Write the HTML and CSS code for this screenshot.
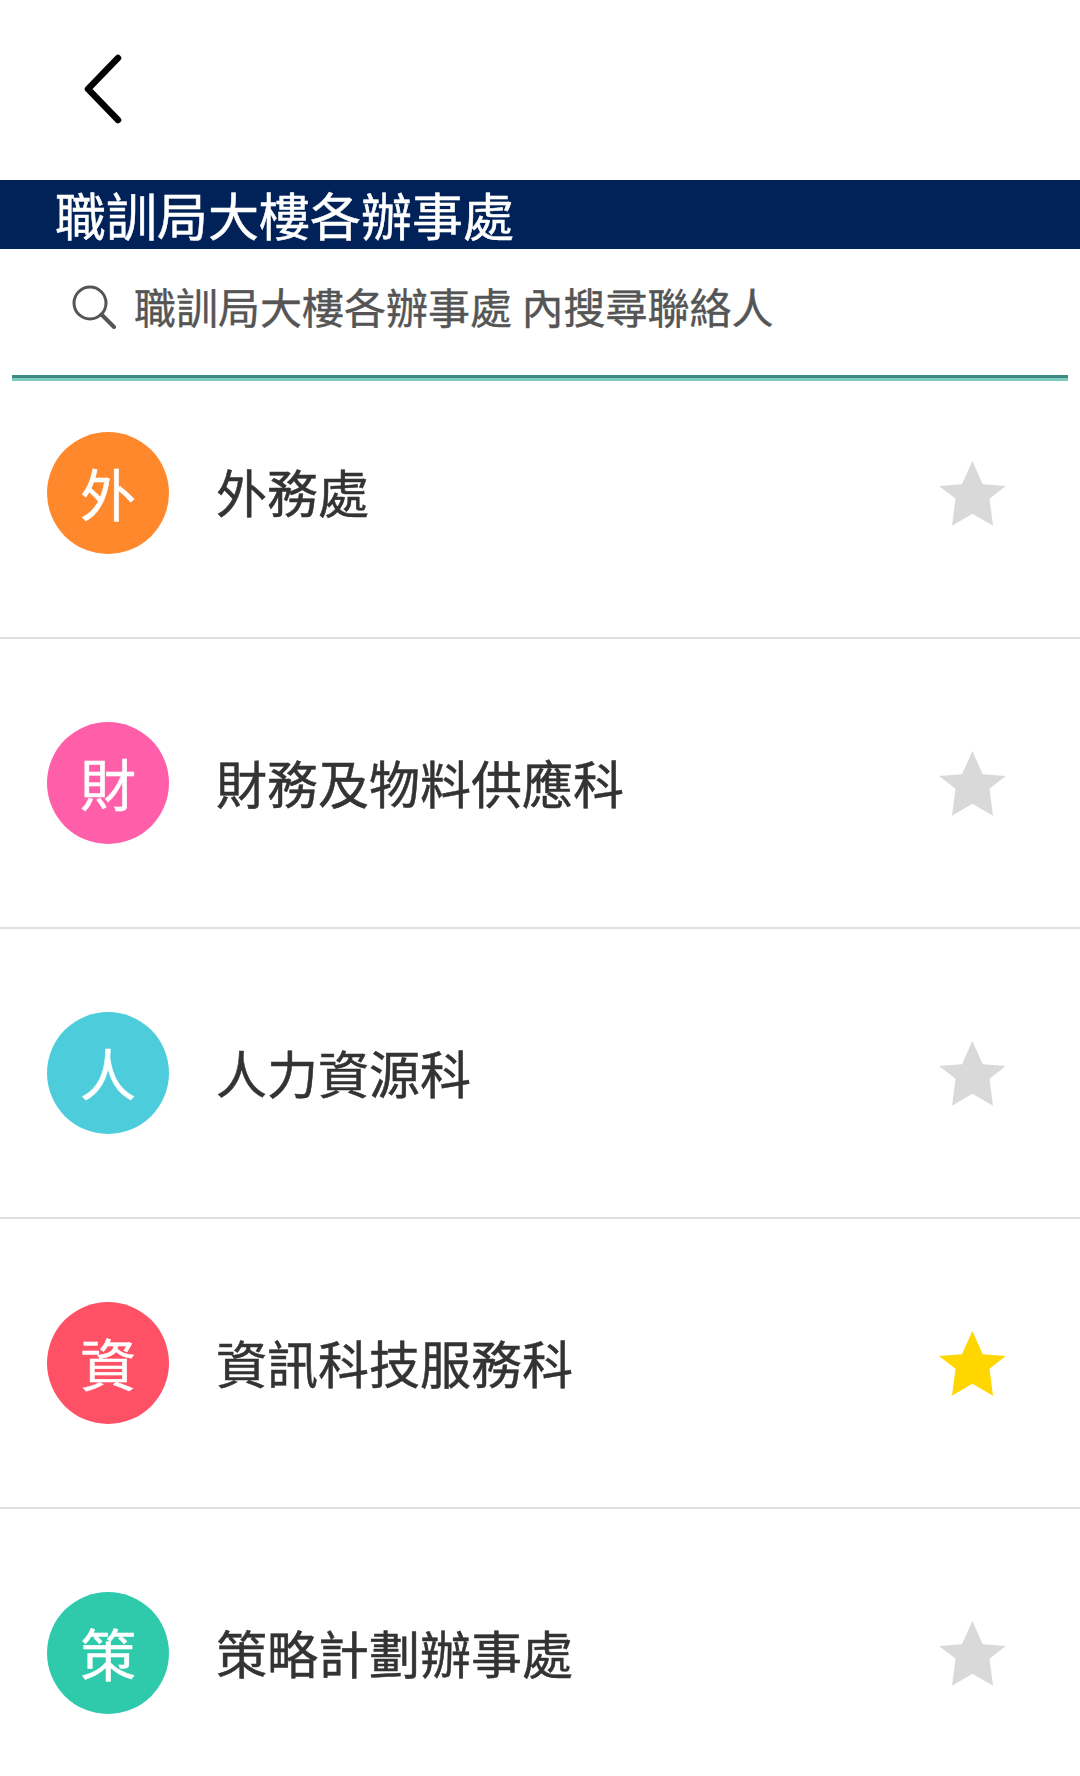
FILE: index.html
```html
<!DOCTYPE html>
<html>
<head>
  <title>職訓局大樓各辦事處</title>
  <link rel="stylesheet" href="styles.css">
</head>
<body>
  <div class="page">
    <div class="top-bar">
      <svg class="back-icon" width="40" height="70" viewBox="0 0 40 70">
        <path d="M34 4 L4 35 L34 66" fill="none" stroke="#000" stroke-width="6.5" stroke-linecap="round" stroke-linejoin="round"/>
      </svg>
    </div>
    <div class="title-bar">職訓局大樓各辦事處</div>
    <div class="search">
      <svg class="search-icon" width="44" height="44" viewBox="0 0 44 44">
        <circle cx="18" cy="18" r="16" fill="none" stroke="#555" stroke-width="3"/>
        <path d="M29.5 29.5 L42 42" fill="none" stroke="#555" stroke-width="4" stroke-linecap="round"/>
      </svg>
      <span class="search-text">職訓局大樓各辦事處 內搜尋聯絡人</span>
    </div>
    <div class="search-line"></div>

    <div class="list">
      <div class="row">
        <div class="avatar orange">外</div>
        <div class="name">外務處</div>
        <svg class="star" width="67" height="65" viewBox="0 0 67 65"><polygon points="33.4,0 43.7,23.3 66.8,25 50.5,37.7 54,64.7 33.4,52.7 13,64.7 16.5,37.7 0,25 23,23.3"/></svg>
      </div>
      <div class="row">
        <div class="avatar pink">財</div>
        <div class="name">財務及物料供應科</div>
        <svg class="star" width="67" height="65" viewBox="0 0 67 65"><polygon points="33.4,0 43.7,23.3 66.8,25 50.5,37.7 54,64.7 33.4,52.7 13,64.7 16.5,37.7 0,25 23,23.3"/></svg>
      </div>
      <div class="row">
        <div class="avatar cyan">人</div>
        <div class="name">人力資源科</div>
        <svg class="star" width="67" height="65" viewBox="0 0 67 65"><polygon points="33.4,0 43.7,23.3 66.8,25 50.5,37.7 54,64.7 33.4,52.7 13,64.7 16.5,37.7 0,25 23,23.3"/></svg>
      </div>
      <div class="row">
        <div class="avatar red">資</div>
        <div class="name">資訊科技服務科</div>
        <svg class="star active" width="67" height="65" viewBox="0 0 67 65"><polygon points="33.4,0 43.7,23.3 66.8,25 50.5,37.7 54,64.7 33.4,52.7 13,64.7 16.5,37.7 0,25 23,23.3"/></svg>
      </div>
      <div class="row">
        <div class="avatar green">策</div>
        <div class="name">策略計劃辦事處</div>
        <svg class="star" width="67" height="65" viewBox="0 0 67 65"><polygon points="33.4,0 43.7,23.3 66.8,25 50.5,37.7 54,64.7 33.4,52.7 13,64.7 16.5,37.7 0,25 23,23.3"/></svg>
      </div>
    </div>
  </div>
</body>
</html>
```

FILE: styles.css
```css
body {
  margin: 0;
  background-color: #fff;
  font-family: "Noto Sans CJK TC", "Noto Sans", sans-serif;
}

.page {
  height: 1776px;
  overflow: hidden;
}

.top-bar {
  display: flex;
  align-items: center;
  height: 180px;
  padding-left: 84px;
  box-sizing: border-box;
}

.back-icon {
  margin-bottom: 2px;
}

.title-bar {
  height: 69px;
  padding-left: 55px;
  background-color: #012258;
  color: #fff;
  font-size: 51px;
  line-height: 69px;
  -webkit-text-stroke: 0.5px #fff;
}

.search {
  display: flex;
  align-items: center;
  height: 116px;
  padding-left: 72px;
  padding-bottom: 10px;
}

.search-icon {
  flex: none;
}

.search-text {
  margin-left: 18px;
  margin-bottom: 4px;
  color: #555;
  font-size: 42px;
  -webkit-text-stroke: 0.4px #555;
}

.search-line {
  height: 3px;
  margin: 0 12px;
  border-top: 3px solid #3f8a80;
  background-color: #7ecbc0;
}

.row {
  display: flex;
  align-items: center;
  height: 288px;
  padding-left: 47px;
  border-bottom: 2px solid #e0e0e0;
}

.row:first-child {
  height: 256px;
  align-items: flex-start;
}

.row:first-child .avatar {
  margin-top: 51px;
}

.row:first-child .name {
  margin-top: 73px;
}

.row:first-child .star {
  margin-top: 80px;
}

.avatar {
  flex: none;
  width: 122px;
  height: 122px;
  border-radius: 50%;
  color: #fff;
  font-size: 56px;
  line-height: 120px;
  text-align: center;
  -webkit-text-stroke: 0.5px #fff;
}

.orange { background-color: #ff882d; }
.pink { background-color: #ff5fa8; }
.cyan { background-color: #4dcddb; }
.red { background-color: #ff5165; }
.green { background-color: #2fc9ac; }

.name {
  flex: 1;
  margin-left: 47px;
  margin-bottom: 2px;
  color: #333;
  font-size: 51px;
  -webkit-text-stroke: 0.5px #333;
}

.star {
  flex: none;
  margin-right: 74px;
  fill: #d9d9d9;
}

.star.active {
  fill: #ffd600;
}
```
